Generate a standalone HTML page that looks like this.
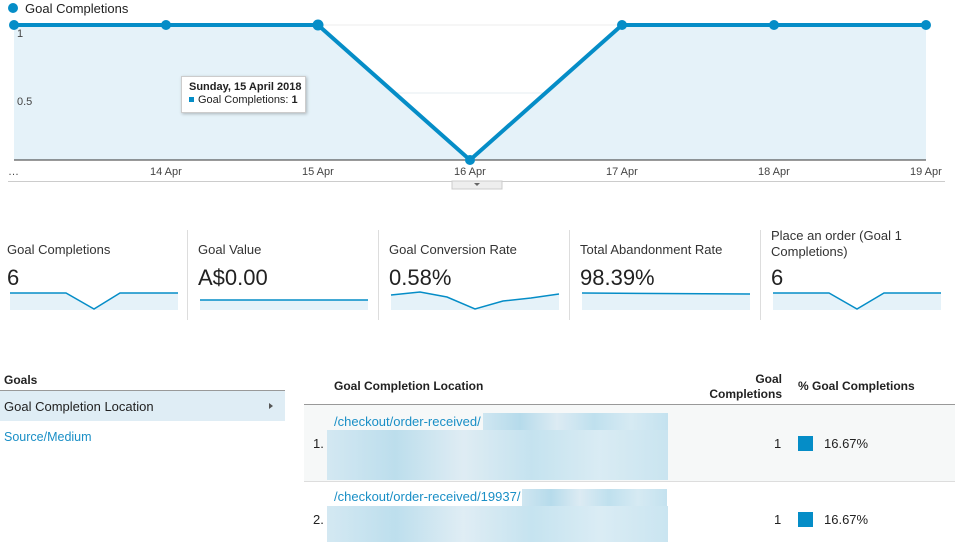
<!DOCTYPE html>
<html><head><style>
body{margin:0;width:961px;height:542px;overflow:hidden;background:#fff;font-family:"Liberation Sans",Arial,sans-serif;color:#222;position:relative}
.a{position:absolute;white-space:nowrap}
.card{position:absolute;top:242px;width:170px;height:80px}
.ct{font-size:13px;color:#333;line-height:16px}
.cv{font-size:22px;color:#222;position:absolute;top:23px;left:0}
.div{position:absolute;top:230px;width:1px;height:90px;background:#ddd}
.blur{position:absolute;background:linear-gradient(90deg,#cfe6f1,#b6dbeb 20%,#dcebf3 40%,#bfe0ee 60%,#d6eaf3 80%,#c4e2ef)}
a{color:#1a8fc6;text-decoration:none}
</style></head><body>
<svg class="a" style="left:0;top:0" width="961" height="200">
<circle cx="13" cy="8" r="5" fill="#058dc7"/>
<line x1="14" y1="25" x2="926" y2="25" stroke="#eee"/>
<line x1="14" y1="93" x2="926" y2="93" stroke="#e6eef2"/>
<polygon points="14,25 318,25 470,160 622,25 926,25 926,160 14,160" fill="#e5f2f9"/>
<line x1="14" y1="160" x2="926" y2="160" stroke="#333"/>
<polyline points="14,25 318,25 470,160 622,25 926,25" fill="none" stroke="#058dc7" stroke-width="4"/>
<g fill="#058dc7"><circle cx="14" cy="25" r="5"/><circle cx="166" cy="25" r="5"/><circle cx="318" cy="25" r="5.5"/><circle cx="470" cy="160" r="5"/><circle cx="622" cy="25" r="5"/><circle cx="774" cy="25" r="5"/><circle cx="926" cy="25" r="5"/></g>
<line x1="8" y1="181.5" x2="945" y2="181.5" stroke="#ccc"/>
<rect x="452" y="181" width="50" height="8" fill="#eee" stroke="#ccc"/>
<polygon points="474,183 480,183 477,186" fill="#666"/>
<g font-size="11" fill="#444" font-family="Liberation Sans"><text x="17" y="37">1</text><text x="17" y="105">0.5</text>
<text x="8" y="175">…</text><text x="150" y="175">14 Apr</text><text x="302" y="175">15 Apr</text><text x="454" y="175">16 Apr</text><text x="606" y="175">17 Apr</text><text x="758" y="175">18 Apr</text><text x="910" y="175">19 Apr</text></g>
</svg>
<div class="a" style="left:25px;top:1px;font-size:13px;color:#222">Goal Completions</div>
<div class="a" style="left:181px;top:76px;width:125px;height:37px;background:#fff;border:1px solid #ccc;box-shadow:1px 1px 3px rgba(0,0,0,.25);font-size:11px;line-height:13px;padding:4px 0 0 7px;box-sizing:border-box">
<b>Sunday, 15 April 2018</b><br><span style="display:inline-block;width:5px;height:5px;background:#058dc7;margin-right:4px;vertical-align:1px"></span>Goal Completions: <b>1</b></div>

<div class="card" style="left:7px"><div class="ct">Goal Completions</div><div class="cv">6</div></div>
<div class="div" style="left:187px"></div>
<div class="card" style="left:198px"><div class="ct">Goal Value</div><div class="cv">A$0.00</div></div>
<div class="div" style="left:378px"></div>
<div class="card" style="left:389px"><div class="ct">Goal Conversion Rate</div><div class="cv">0.58%</div></div>
<div class="div" style="left:569px"></div>
<div class="card" style="left:580px"><div class="ct">Total Abandonment Rate</div><div class="cv">98.39%</div></div>
<div class="div" style="left:760px"></div>
<div class="card" style="left:771px"><div class="ct" style="margin-top:-14px">Place an order (Goal 1<br>Completions)</div><div class="cv">6</div></div>
<svg class="a" style="left:0;top:285px" width="961" height="30">
<g fill="#e5f2f9" stroke="none">
<polygon points="10,8 66,8 94,24 120,8 178,8 178,25 10,25"/>
<polygon points="200,15 368,15 368,25 200,25"/>
<polygon points="391,10 420,7 447,12 475,24 503,16 531,13 559,9 559,25 391,25"/>
<polygon points="582,8 750,9 750,25 582,25"/>
<polygon points="773,8 829,8 857,24 884,8 941,8 941,25 773,25"/>
</g>
<g fill="none" stroke="#058dc7" stroke-width="1.5">
<polyline points="10,8 66,8 94,24 120,8 178,8"/>
<polyline points="200,15 368,15"/>
<polyline points="391,10 420,7 447,12 475,24 503,16 531,13 559,9"/>
<polyline points="582,8 750,9"/>
<polyline points="773,8 829,8 857,24 884,8 941,8"/>
</g></svg>

<div class="a" style="left:4px;top:373px;font-size:12px;font-weight:bold">Goals</div>
<div class="a" style="left:0;top:390px;width:285px;height:1px;background:#999"></div>
<div class="a" style="left:0;top:391px;width:285px;height:30px;background:#dfedf5"></div>
<div class="a" style="left:4px;top:399px;font-size:13px">Goal Completion Location</div>
<div class="a" style="left:269px;top:403px;width:0;height:0;border-left:4px solid #555;border-top:3px solid transparent;border-bottom:3px solid transparent"></div>
<div class="a" style="left:4px;top:430px;font-size:12.5px;color:#1a8fc6">Source/Medium</div>

<div class="a" style="left:334px;top:379px;font-size:12px;font-weight:bold">Goal Completion Location</div>
<div class="a" style="left:700px;top:372px;width:82px;text-align:right;font-size:12px;font-weight:bold;line-height:15px">Goal<br>Completions</div>
<div class="a" style="left:798px;top:379px;font-size:12px;font-weight:bold">% Goal Completions</div>
<div class="a" style="left:304px;top:404px;width:651px;height:1px;background:#999"></div>
<div class="a" style="left:304px;top:405px;width:651px;height:76px;background:#f6f8f8"></div>
<div class="a" style="left:304px;top:481px;width:651px;height:1px;background:#ddd"></div>

<div class="a" style="left:334px;top:414px;font-size:13px"><a>/checkout/order-received/</a></div>
<div class="blur" style="left:483px;top:413px;width:185px;height:17px"></div>
<div class="blur" style="left:327px;top:430px;width:341px;height:50px;opacity:.9"></div>
<div class="a" style="left:313px;top:436px;font-size:13px;z-index:2">1.</div>
<div class="a" style="left:774px;top:436px;font-size:13px">1</div>
<div class="a" style="left:798px;top:436px;width:15px;height:15px;background:#058dc7"></div>
<div class="a" style="left:824px;top:436px;font-size:13px">16.67%</div>

<div class="a" style="left:334px;top:489px;font-size:13px"><a>/checkout/order-received/19937/</a></div>
<div class="blur" style="left:522px;top:489px;width:145px;height:17px"></div>
<div class="blur" style="left:327px;top:506px;width:341px;height:36px;opacity:.9"></div>
<div class="a" style="left:313px;top:512px;font-size:13px;z-index:2">2.</div>
<div class="a" style="left:774px;top:512px;font-size:13px">1</div>
<div class="a" style="left:798px;top:512px;width:15px;height:15px;background:#058dc7"></div>
<div class="a" style="left:824px;top:512px;font-size:13px">16.67%</div>
</body></html>
